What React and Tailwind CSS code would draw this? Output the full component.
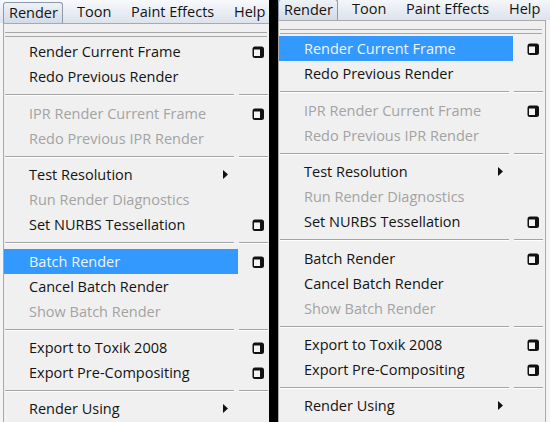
import React from "react";

const items = [
  { label: "Render Current Frame", box: true },
  { label: "Redo Previous Render" },
  { sep: 12 },
  { label: "IPR Render Current Frame", disabled: true, box: true },
  { label: "Redo Previous IPR Render", disabled: true },
  { sep: 11 },
  { label: "Test Resolution", arrow: true },
  { label: "Run Render Diagnostics", disabled: true },
  { label: "Set NURBS Tessellation", box: true },
  { sep: 12 },
  { label: "Batch Render", box: true },
  { label: "Cancel Batch Render" },
  { label: "Show Batch Render", disabled: true },
  { sep: 11 },
  { label: "Export to Toxik 2008", box: true },
  { label: "Export Pre-Compositing", box: true },
  { sep: 11 },
  { label: "Render Using", arrow: true },
  { sep: 12 },
];

function OptionBox() {
  return (
    <svg width="12" height="12" viewBox="0 0 12 12">
      <rect x="0.5" y="0.5" width="11.5" height="11.5" rx="2.5" fill="#111" />
      <rect x="2" y="3.5" width="6" height="6.5" fill="#f4f4f4" />
    </svg>
  );
}

function Arrow({ light }) {
  return (
    <svg width="5" height="9" viewBox="0 0 5 9">
      <path d="M0 0 L5 4.5 L0 9 Z" fill={light ? "#ffffff" : "#111"} />
    </svg>
  );
}

function Separator({ h }) {
  return (
    <div className={`flex pt-[5px] ${h === 12 ? "h-[12px]" : "h-[11px]"}`}>
      <div className="ml-[1px] w-[229px] h-[2px] border-t border-[#a4a4a4] border-b-white" style={{ borderBottomWidth: 1 }} />
      <div className="ml-[5px] w-[29px] h-[2px] border-t border-[#a4a4a4] border-b-white" style={{ borderBottomWidth: 1 }} />
    </div>
  );
}

function MenuBar() {
  return (
    <div className="h-[23px] flex items-end bg-gradient-to-b from-[#f7f9fc] to-[#dde3ec] text-[#141414]">
      <div className="ml-[3px] w-[60px] h-[21px] pl-[5px] leading-[20px] border border-b-0 border-[#8d9aad] rounded-t-[3px] bg-gradient-to-b from-[#eef2f7] to-[#d3dbe6]">
        Render
      </div>
      <div className="w-[68px] h-[21px] pl-[14px] leading-[20px]">Toon</div>
      <div className="w-[103px] h-[21px] leading-[20px]">Paint Effects</div>
      <div className="h-[21px] leading-[20px]">Help</div>
    </div>
  );
}

function Panel({ active }) {
  return (
    <div className="w-[275px] h-[440px] bg-[#f4f4f4] shrink-0">
      <MenuBar />
      <div className="ml-[3px] w-[268px] h-[417px] bg-[#f0f0f0] border-t border-l border-r border-[#a9a9a9]">
        <div className="h-[15px] pt-[8px]">
          <div className="ml-[1px] mr-[3px] h-px bg-[#a8a8a8]" />
          <div className="ml-[1px] mr-[3px] mt-[3px] h-px bg-[#a8a8a8]" />
        </div>
        {items.map((it, i) =>
          it.sep ? (
            <Separator key={i} h={it.sep} />
          ) : (
            <div key={i} className="h-[25px] flex">
              <div
                className={`w-[234px] flex items-center justify-between pl-[25px] pr-[10px] ${
                  it.label === active
                    ? "bg-[#3399ff] text-[#eef5ff]"
                    : it.disabled
                    ? "text-[#a3a3a3]"
                    : "text-[#141414]"
                }`}
              >
                <span className="whitespace-nowrap">{it.label}</span>
                {it.arrow && <Arrow light={it.label === active} />}
              </div>
              <div className="flex-1 flex items-center pl-[14px]">{it.box && <OptionBox />}</div>
            </div>
          )
        )}
      </div>
    </div>
  );
}

export default function App() {
  return (
    <div
      className="flex w-[550px] h-[422px] overflow-hidden bg-[#f0f0f0] text-[14.5px]"
      style={{ fontFamily: '"Open Sans", "Noto Sans", sans-serif' }}
    >
      <div className="w-[269px] h-[422px] overflow-hidden shrink-0">
        <Panel active="Batch Render" />
      </div>
      <div className="w-[9px] h-[422px] bg-black shrink-0" />
      <div className="flex-1 h-[422px] overflow-hidden">
        <div className="-ml-[3px] -mt-[3px]">
          <Panel active="Render Current Frame" />
        </div>
      </div>
    </div>
  );
}
